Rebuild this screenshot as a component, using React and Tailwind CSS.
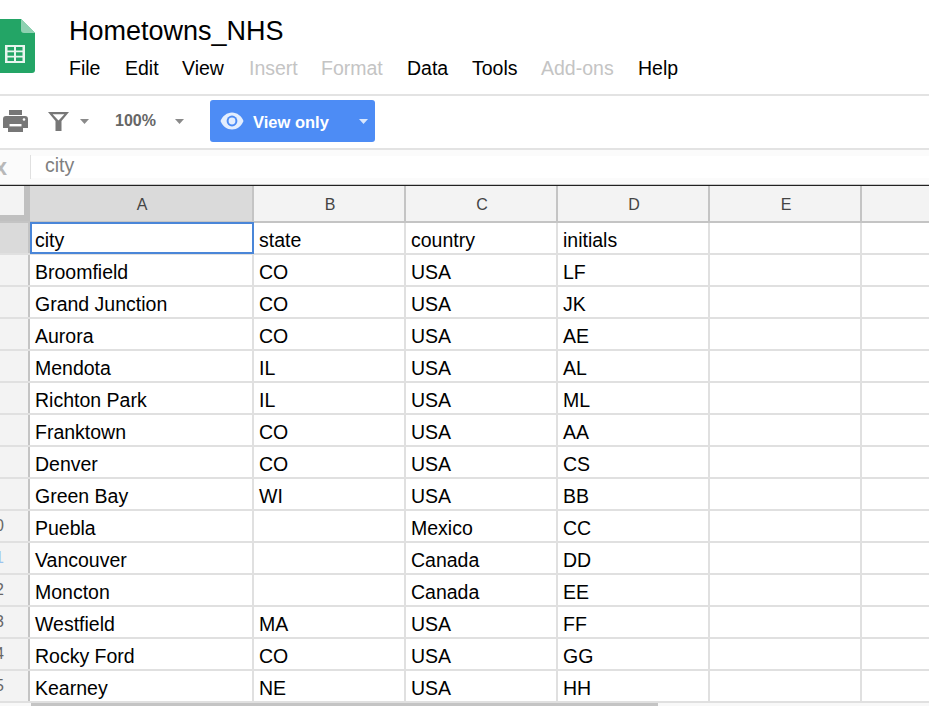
import React from "react";

const rows = [
  ["city", "state", "country", "initials"],
  ["Broomfield", "CO", "USA", "LF"],
  ["Grand Junction", "CO", "USA", "JK"],
  ["Aurora", "CO", "USA", "AE"],
  ["Mendota", "IL", "USA", "AL"],
  ["Richton Park", "IL", "USA", "ML"],
  ["Franktown", "CO", "USA", "AA"],
  ["Denver", "CO", "USA", "CS"],
  ["Green Bay", "WI", "USA", "BB"],
  ["Puebla", "", "Mexico", "CC"],
  ["Vancouver", "", "Canada", "DD"],
  ["Moncton", "", "Canada", "EE"],
  ["Westfield", "MA", "USA", "FF"],
  ["Rocky Ford", "CO", "USA", "GG"],
  ["Kearney", "NE", "USA", "HH"],
];

const cols = ["A", "B", "C", "D", "E"];
const colW = ["w-[224px]", "w-[152px]", "w-[152px]", "w-[152px]", "w-[152px]"];

function SheetLogo() {
  return (
    <svg width="50" height="54" viewBox="0 0 50 54" className="ml-[-15px] shrink-0">
      <path d="M3 0H36L50 14V51a3 3 0 0 1-3 3H3a3 3 0 0 1-3-3V3a3 3 0 0 1 3-3z" fill="#23a566" />
      <path d="M36 0L50 14H39a3 3 0 0 1-3-3z" fill="#8ed1b1" />
      <path d="M20 26h20v18H20z" fill="#e8f5ee" />
      <path d="M22.5 28h6.5v3.5h-6.5zM31 28h6.5v3.5H31zM22.5 33.3h6.5v3.5h-6.5zM31 33.3h6.5v3.5H31zM22.5 38.6h6.5v3.4h-6.5zM31 38.6h6.5v3.4H31z" fill="#23a566" />
    </svg>
  );
}

function Caret({ color = "#8a8a8a" }) {
  return (
    <svg width="9" height="5" viewBox="0 0 9 5" className="shrink-0">
      <path d="M0 0h9L4.5 5z" fill={color} />
    </svg>
  );
}

function Menu({ children, off, className }) {
  return <span className={`${off ? "text-[#c4c4c4]" : "text-black"} ${className}`}>{children}</span>;
}

export default function App() {
  return (
    <div className="w-[929px] h-[706px] overflow-hidden bg-white font-['Liberation_Sans',Arial,sans-serif] flex flex-col">
      {/* Title + menus */}
      <div className="h-[94px] shrink-0 flex">
        <div className="pt-[19px] w-[69px] shrink-0">
          <SheetLogo />
        </div>
        <div className="flex flex-col">
          <div className="h-[30px] mt-[16px] text-[27px] leading-[30px] text-black">Hometowns_NHS</div>
          <div className="mt-[10px] h-[24px] flex items-center text-[19.5px] leading-[24px]">
            <Menu className="w-[56px]">File</Menu>
            <Menu className="w-[57px]">Edit</Menu>
            <Menu className="w-[67px]">View</Menu>
            <Menu off className="w-[72px]">Insert</Menu>
            <Menu off className="w-[86px]">Format</Menu>
            <Menu className="w-[65px]">Data</Menu>
            <Menu className="w-[69px]">Tools</Menu>
            <Menu off className="w-[97px]">Add-ons</Menu>
            <Menu>Help</Menu>
          </div>
        </div>
      </div>

      {/* Toolbar */}
      <div className="h-[56px] shrink-0 border-t-2 border-b-2 border-[#e3e3e3] flex items-center pb-[2px]">
        <svg width="25" height="22" viewBox="0 0 25 22" className="ml-[3px] shrink-0">
          <path d="M6 0h13v5H6z" fill="#777" />
          <path d="M3 6h19a3 3 0 0 1 3 3v9h-5v4H5v-4H0V9a3 3 0 0 1 3-3z" fill="#777" />
          <path d="M6.5 14h12v2.4h-12z" fill="#fff" />
          <circle cx="21" cy="9.5" r="1.3" fill="#fff" />
        </svg>
        <svg width="21" height="19" viewBox="0 0 21 19" className="ml-[20px] shrink-0">
          <path d="M0 0h21L13.5 9v10h-6V9z" fill="#777" />
          <path d="M4.6 2.2h11.8L10.5 8.6z" fill="#fff" />
        </svg>
        <span className="ml-[11px]"><Caret /></span>
        <span className="ml-[26px] w-[60px] text-[16px] font-bold text-[#666]">100%</span>
        <Caret />
        <div className="ml-[26px] w-[165px] h-[42px] rounded-[3px] bg-[#4d8cf5] flex items-center text-white">
          <svg width="24" height="24" viewBox="0 0 24 24" className="ml-[10px] shrink-0">
            <path d="M12 3.5C7 3.5 2.5 7 .5 12c2 5 6.5 8.5 11.5 8.5S21.500 17 23.500 12C21.500 7 17 3.500 12 3.500z" fill="#e3eefe" />
            <circle cx="12" cy="12" r="5.400" fill="#4d8cf5" />
            <circle cx="12" cy="12" r="3.400" fill="#e3eefe" />
          </svg>
          <span className="ml-[9px] w-[106px] pt-[2px] text-[16.5px] font-bold">View only</span>
          <Caret color="#d9e7fd" />
        </div>
      </div>

      {/* Formula bar */}
      <div className="h-[34px] shrink-0 flex items-center bg-[#fbfbfb]">
        <span className="w-[30px] shrink-0 text-right pr-[23px] flex justify-end text-[23px] leading-[24px] text-[#b8b8b8] font-bold">x</span>
        <div className="flex-1 h-[22px] bg-white flex items-center relative">
          <span className="w-px h-[24px] bg-[#e0e0e0] shrink-0" />
          <span className="ml-[14px] text-[19.5px] leading-[22px] text-[#808080] -translate-y-[2px]">city</span>
        </div>
      </div>

      {/* Grid */}
      <div className="h-px shrink-0 bg-[#c8c8c8]" />
      <div className="flex-1 min-h-0 border-t border-[#222] overflow-hidden">
        <div className="flex h-[37px] bg-[#f3f3f3] border-b-[2px] border-[#c4c4c4]">
          <div className="w-[30px] shrink-0 bg-[#f3f3f3] border-r-[6px] border-b-[6px] border-[#c0c0c0]" />
          {cols.map((c, i) => (
            <div
              key={c}
              className={`${colW[i]} shrink-0 border-r-[2px] border-[#c4c4c4] flex items-center justify-center pl-[2px] pt-[2px] text-[16px] text-[#444] ${i === 0 ? "bg-[#dadada]" : ""}`}
            >
              {c}
            </div>
          ))}
          <div className="flex-1" />
        </div>
        {rows.map((r, ri) => (
          <div key={ri} className="flex h-[32px] border-b-[2px] border-[#e0e0e0]">
            <div className={`w-[30px] shrink-0 border-r-[2px] border-[#c4c4c4] flex items-center justify-end pr-[24px] text-[16px] ${ri === 0 ? "bg-[#dadada]" : "bg-[#f3f3f3]"} ${ri === 10 ? "text-[#9cc3ee]" : "text-[#666]"}`}>
              {ri + 1 >= 10 ? ri + 1 : ""}
            </div>
            {cols.map((c, i) => (
              <div
                key={c}
                className={`${colW[i]} shrink-0 relative border-r-[2px] border-[#e0e0e0] flex items-center pl-[5px] pt-[6px] text-[19.5px] text-black whitespace-nowrap`}
              >
                {r[i] || ""}
                {ri === 0 && i === 0 && (
                  <span className="absolute left-0 right-[-2px] top-[-1px] bottom-[-1px] border-2 border-[#4a86d8]" />
                )}
              </div>
            ))}
            <div className="flex-1" />
          </div>
        ))}
        <div className="h-[3px] bg-[#f8f8f8] flex">
          <div className="ml-[31px] w-[627px] bg-[#c4c4c4]" />
        </div>
      </div>
    </div>
  );
}
